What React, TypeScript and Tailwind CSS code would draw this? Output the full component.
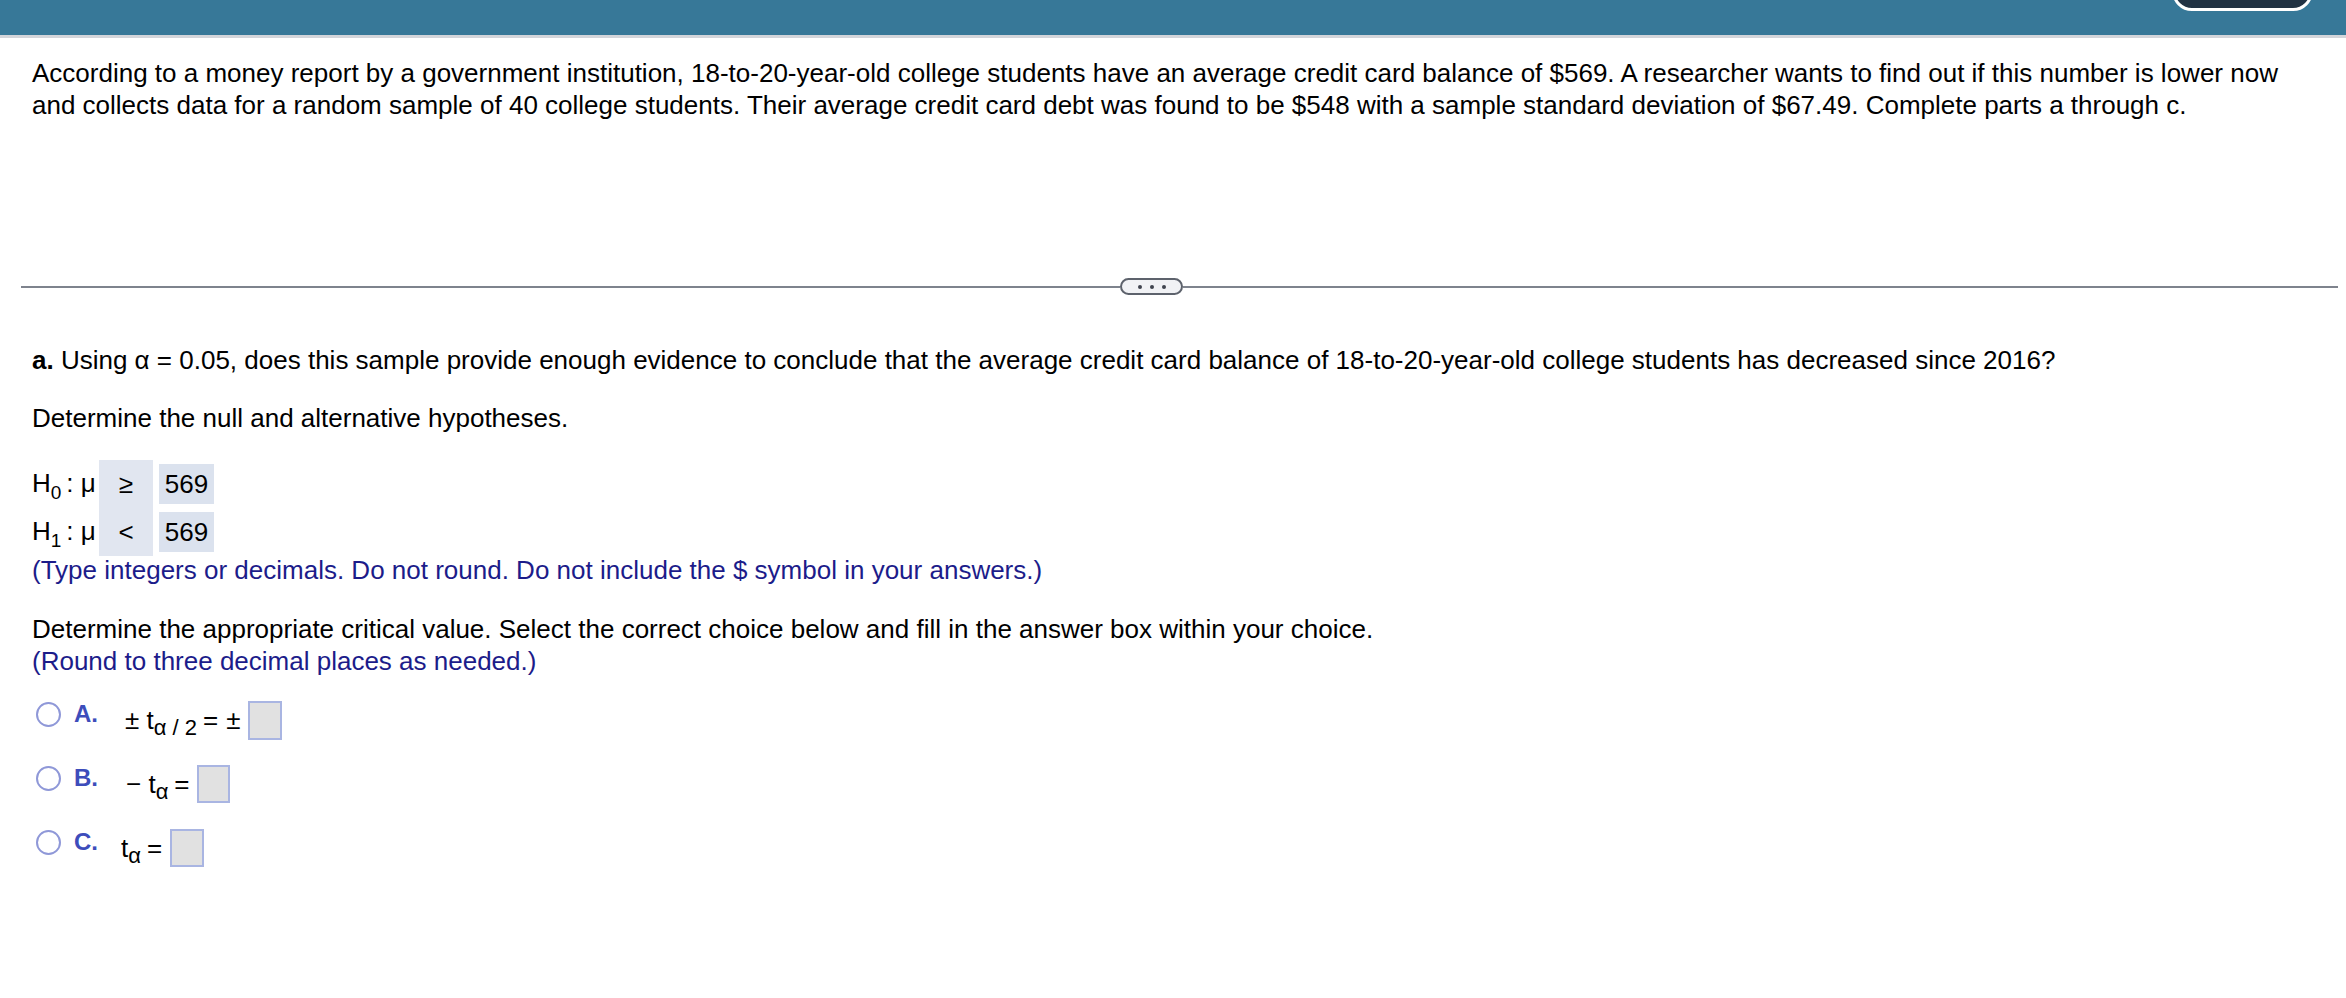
import React from 'react';

const Radio: React.FC = () => (
  <span className="inline-block h-[25px] w-[25px] shrink-0 rounded-full border-[2.5px] border-[#8f98d8] bg-white" />
);

const AnswerBox: React.FC<{ size: string }> = ({ size }) => (
  <span className={`inline-block shrink-0 border-2 border-[#a9b5e2] bg-[#e1e1e1] ${size}`} />
);

const Option: React.FC<{ letter: string; children: React.ReactNode; labelW: string }> = ({ letter, children, labelW }) => (
  <div className="flex h-[64px] items-center">
    <div className="ml-[4px] -mt-[12px] flex items-center">
      <Radio />
    </div>
    <span className={`ml-[13px] -mt-[12px] text-[24px] font-bold text-[#3d4dbb] ${labelW}`}>{letter}</span>
    <div className="flex items-center">{children}</div>
  </div>
);

const Sub: React.FC<{ children: React.ReactNode }> = ({ children }) => (
  <span className="relative top-[8px] text-[22px]">{children}</span>
);

const HLabel: React.FC<{ n: string }> = ({ n }) => (
  <div className="flex h-[48px] items-center">
    <span>
      H<span className="relative top-[7px] text-[19px]">{n}</span>
      <span className="ml-[5px]">: μ</span>
    </span>
  </div>
);

export default function App() {
  return (
    <div className="min-h-screen bg-white font-['Liberation_Sans',Arial,sans-serif] text-[26px] leading-[32px] text-black">
      <header className="flex h-[38px] justify-end overflow-hidden border-b-[3px] border-[#d3d5da] bg-[#377898] pr-[33px]">
        <div className="-mt-[29px] h-[40px] w-[141px] rounded-full border-[3px] border-white bg-[#213243]" />
      </header>

      <p className="px-[32px] pt-[19px]">
        According to a money report by a government institution, 18-to-20-year-old college students have an average credit card balance of $569. A researcher wants to find out if this number is lower now and collects data for a random sample of 40 college students. Their average credit card debt was found to be $548 with a sample standard deviation of $67.49. Complete parts a through c.
      </p>

      <div className="ml-[21px] mr-[8px] mt-[157px] flex h-[17px] items-center">
        <div className="h-[2px] w-[1099px] bg-[#7e838d]" />
        <div className="flex h-[17px] w-[63px] items-center justify-center gap-[8px] rounded-full border-2 border-[#5d626c] bg-[#f1f2f5]">
          <span className="h-[4px] w-[4px] rounded-full bg-[#3f444e]" />
          <span className="h-[4px] w-[4px] rounded-full bg-[#3f444e]" />
          <span className="h-[4px] w-[4px] rounded-full bg-[#3f444e]" />
        </div>
        <div className="h-[2px] flex-1 bg-[#7e838d]" />
      </div>

      <section className="px-[32px] pt-[49px]">
        <p>
          <span className="font-bold">a.</span> Using α = 0.05, does this sample provide enough evidence to conclude that the average credit card balance of 18-to-20-year-old college students has decreased since 2016?
        </p>
        <p className="mt-[26px]">Determine the null and alternative hypotheses.</p>

        <div className="mt-[26px] flex">
          <div className="flex w-[67px] flex-col">
            <HLabel n="0" />
            <HLabel n="1" />
          </div>
          <div className="flex w-[54px] flex-col bg-[#e1e6f0]">
            <div className="flex h-[48px] items-center justify-center">≥</div>
            <div className="flex h-[48px] items-center justify-center">&lt;</div>
          </div>
          <div className="ml-[6px] flex flex-col">
            <div className="flex h-[48px] items-center">
              <span className="flex h-[40px] w-[55px] items-center justify-center bg-[#dbe2ee]">569</span>
            </div>
            <div className="flex h-[48px] items-center">
              <span className="flex h-[40px] w-[55px] items-center justify-center bg-[#dbe2ee]">569</span>
            </div>
          </div>
        </div>
        <p className="-mt-[2px] text-[#1c1c8a]">
          (Type integers or decimals. Do not round. Do not include the $ symbol in your answers.)
        </p>

        <p className="mt-[27px]">
          Determine the appropriate critical value. Select the correct choice below and fill in the answer box within your choice.
        </p>
        <p className="text-[#1c1c8a]">(Round to three decimal places as needed.)</p>

        <div className="mt-[11px]">
          <Option letter="A." labelW="w-[51px]">
            <span>± t</span>
            <Sub>α / 2</Sub>
            <span className="ml-[6px]">=</span>
            <span className="ml-[8px]">±</span>
            <span className="ml-[8px] flex">
              <AnswerBox size="w-[34px] h-[39px]" />
            </span>
          </Option>
          <Option letter="B." labelW="w-[52px]">
            <span>− t</span>
            <Sub>α</Sub>
            <span className="ml-[6px]">=</span>
            <span className="ml-[7px] flex">
              <AnswerBox size="w-[33px] h-[38px]" />
            </span>
          </Option>
          <Option letter="C." labelW="w-[47px]">
            <span>t</span>
            <Sub>α</Sub>
            <span className="ml-[6px]">=</span>
            <span className="ml-[8px] flex">
              <AnswerBox size="w-[34px] h-[38px]" />
            </span>
          </Option>
        </div>
      </section>
    </div>
  );
}
